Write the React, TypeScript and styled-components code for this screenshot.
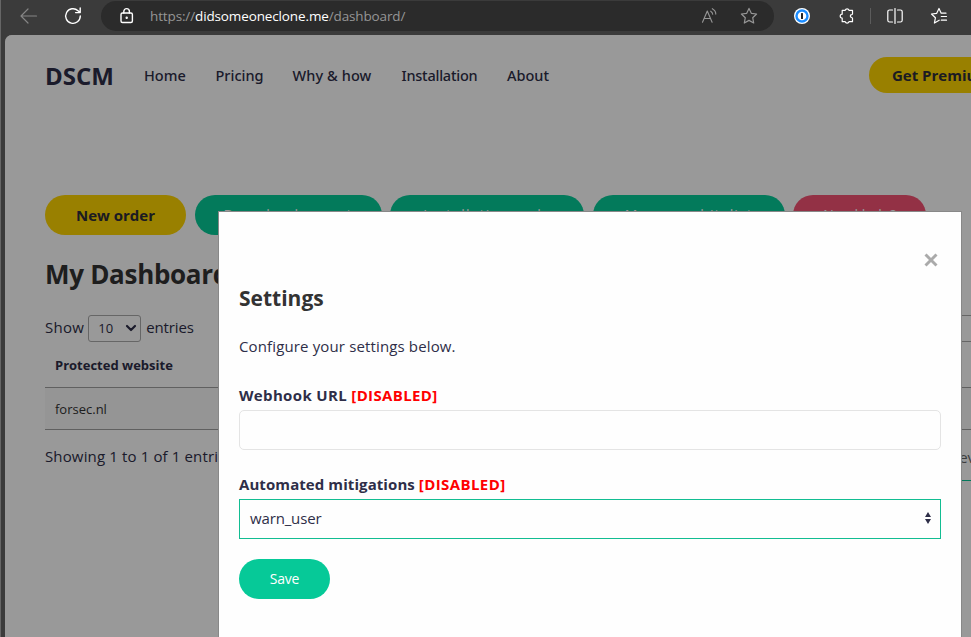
import React from 'react';
import styled, { createGlobalStyle } from 'styled-components';

const Global = createGlobalStyle`
  * { box-sizing: border-box; }
  html, body { margin: 0; width: 971px; height: 637px; overflow: hidden; background: #3b3b3b; }
  body, button, select, input { font-family: "Open Sans", "Noto Sans", sans-serif; }
`;

const Window = styled.div`
  width: 971px;
  height: 637px;
  overflow: hidden;
  display: flex;
  flex-direction: column;
  background: #3b3b3b;
  border-left: 1px solid #666;
  color: #2e2e48;
`;

const Text = styled.span<{ $ls?: number }>`
  letter-spacing: ${(p) => p.$ls ?? 0}px;
  white-space: nowrap;
`;

const Toolbar = styled.div`
  flex: none;
  height: 35px;
  display: flex;
  align-items: flex-start;
`;

const NavIcons = styled.div`
  width: 100px;
  height: 32px;
  display: flex;
  align-items: center;
  padding-left: 18px;
  gap: 25px;
`;

const AddressBar = styled.div`
  width: 673px;
  height: 30px;
  margin-top: 1px;
  padding: 0 16px 0 17px;
  border-radius: 15px;
  background: #2b2b2b;
  display: flex;
  align-items: center;
`;

const Url = styled.div`
  flex: 1;
  margin-left: 14px;
  font-size: 13.5px;
  line-height: 20px;
  color: #969696;
  white-space: nowrap;
  b { font-weight: 400; color: #fff; }
`;

const AddressActions = styled.div`
  display: flex;
  align-items: center;
  gap: 22px;
`;

const Extensions = styled.div`
  height: 32px;
  display: flex;
  align-items: center;
  margin-left: 20px;
`;

const Separator = styled.i`
  width: 1px;
  height: 16px;
  margin: 0 15px 0 14px;
  background: #5c5c5c;
`;

const Gap = styled.i<{ $w: number }>`
  width: ${(p) => p.$w}px;
`;

const Page = styled.main`
  position: relative;
  flex: 1;
  margin-left: 4px;
  background: #fff;
  border-top-left-radius: 7px;
  overflow: hidden;
`;

const Header = styled.header`
  height: 80px;
  padding-left: 40px;
  display: flex;
  align-items: center;
  width: 1100px;
`;

const Logo = styled.div`
  width: 99px;
  font-size: 24px;
  font-weight: 700;
`;

const Menu = styled.nav`
  display: flex;
  width: 725px;
  font-family: "Noto Sans", "Open Sans", sans-serif;
  font-size: 14.5px;
  font-weight: 500;
`;

const MenuItem = styled.a<{ $w: number }>`
  width: ${(p) => p.$w}px;
`;

const Pill = styled.button<{ $w: number; $h: number; $bg: string; $dark?: boolean }>`
  flex: none;
  width: ${(p) => p.$w}px;
  height: ${(p) => p.$h}px;
  padding: 0 0 1px;
  border: 0;
  border-radius: 20px;
  background: ${(p) => p.$bg};
  color: ${(p) => (p.$dark ? '#2e2e3a' : '#fff')};
  font-size: ${(p) => (p.$dark ? 15 : 14)}px;
  font-weight: ${(p) => (p.$dark ? 700 : 400)};
`;

const Actions = styled.div`
  display: flex;
  gap: 8.6px;
  margin: 80px 0 0 40px;
  width: 1000px;
`;

const Title = styled.h1`
  margin: 20px 0 0 40px;
  font-size: 26px;
  line-height: 38px;
  font-weight: 700;
  color: #333;
`;

const Length = styled.div`
  display: flex;
  align-items: center;
  width: 1000px;
  height: 28px;
  margin: 21px 0 0 40px;
  font-size: 15px;
  > span { margin-top: -2px; }
`;

const LengthSelect = styled.div`
  flex: none;
  display: flex;
  align-items: center;
  justify-content: space-between;
  width: 53px;
  height: 27px;
  margin: 0 5px 0 4px;
  padding: 0 3px 0 9px;
  border: 1px solid #aaa;
  border-radius: 3px;
  font-size: 13px;
`;

const Filter = styled.div`
  flex: none;
  width: 180px;
  height: 27px;
  margin-left: 730px;
  border: 1px solid #aaa;
`;

const Table = styled.div`
  margin-left: 40px;
  width: 1000px;
`;

const HeadRow = styled.div`
  height: 46px;
  padding: 0 10px;
  display: flex;
  align-items: center;
  font-size: 13px;
  font-weight: 700;
  border-bottom: 1px solid #a0a0a0;
`;

const Row = styled.div`
  height: 42px;
  padding: 0 10px;
  display: flex;
  align-items: center;
  font-size: 13px;
  background: #f9f9f9;
  color: #333;
  border-bottom: 1px solid #a0a0a0;
`;

const TableFooter = styled.div`
  display: flex;
  align-items: flex-start;
  width: 1000px;
  height: 52px;
  margin-left: 40px;
  font-size: 15px;
  line-height: 52px;
`;

const PageLink = styled.div`
  margin-left: auto;
  width: 115px;
  height: 51px;
  padding-left: 14px;
  font-size: 15px;
  line-height: 55px;
  color: #666;
  border-bottom: 1px solid #06c998;
`;

const Backdrop = styled.div`
  position: absolute;
  inset: 0;
  background: rgba(0, 0, 0, 0.4);
`;

const Modal = styled.section`
  position: absolute;
  left: 213px;
  top: 176px;
  width: 744px;
  height: 480px;
  padding: 33px 20px 0;
  border: 1px solid #888;
  background: #fefefe;
`;

const CloseRow = styled.div`
  display: flex;
  justify-content: flex-end;
  height: 31px;
  padding: 7px 2px 0 0;
`;

const ModalTitle = styled.h2`
  margin: 5px 0 0;
  font-size: 21px;
  line-height: 34px;
  font-weight: 700;
  color: #333;
`;

const Lead = styled.p`
  margin: 19px 0 0;
  font-size: 15px;
  line-height: 24px;
`;

const Label = styled.div`
  height: 27px;
  font-size: 15px;
  line-height: 24px;
  font-weight: 700;
  em { font-style: normal; color: #f00; }
`;

const Field = styled.div<{ $top: number }>`
  margin-top: ${(p) => p.$top}px;
`;

const Input = styled.input`
  display: block;
  width: 702px;
  height: 40px;
  border: 1px solid #e4e4e4;
  border-radius: 5px;
  background: #fefefe;
`;

const Select = styled.div`
  display: flex;
  align-items: center;
  justify-content: space-between;
  width: 702px;
  height: 40px;
  padding: 0 9px 2px 10px;
  border: 1px solid #12bd92;
  font-size: 15px;
`;

const SaveRow = styled.div`
  margin-top: 20px;
`;

const Svg = ({ w, h, children, color = '#fff', sw = 1.2 }: { w: number; h: number; children: React.ReactNode; color?: string; sw?: number }) => (
  <svg width={w} height={h} viewBox={`0 0 ${w} ${h}`} fill="none" stroke={color} strokeWidth={sw} strokeLinecap="round" strokeLinejoin="round">
    {children}
  </svg>
);

export default function App() {
  return (
    <>
      <Global />
      <Window>
        <Toolbar>
          <NavIcons>
            <Svg w={20} h={16} color="#858585"><path d="M17.5 8H2M9 1 2 8l7 7" /></Svg>
            <Svg w={18} h={18} sw={1.4}><path d="M16.3 9A7.3 7.3 0 1 1 14 3.7L16 5.5M16.2 1v4.6h-4.6" /></Svg>
          </NavIcons>
          <AddressBar>
            <Svg w={18} h={18} sw={1.4}><path d="M5.8 6V4.4a2.7 2.7 0 0 1 5.6 0V6" /><rect x="3" y="6" width="11.4" height="9.5" rx="1.5" /><circle cx="8.7" cy="10.8" r=".5" fill="#fff" /></Svg>
            <Url><Text $ls={-0.13}>https://<b>didsomeoneclone.me</b>/dashboard/</Text></Url>
            <AddressActions>
              <Svg w={18} h={18} color="#969696" sw={1.1}><path d="M2.5 15.3 7.3 4l4.8 11.3M4.2 11.5h6.2M10.7 4.2c1.2.7 1.9 1.8 2 3.1M12.3 1.7c2.2 1.2 3.5 3.1 3.5 5.4" /></Svg>
              <Svg w={18} h={18} color="#969696"><path d="m9 1.4 2.3 4.9 5.3.7-3.9 3.7 1 5.3L9 13.4 4.3 16l1-5.3L1.4 7l5.3-.7Z" /></Svg>
            </AddressActions>
          </AddressBar>
          <Extensions>
            <svg width="16" height="16" viewBox="0 0 16 16"><circle cx="8" cy="8" r="8" fill="#fff" /><circle cx="8" cy="8" r="5.5" fill="#fff" stroke="#1a8cff" strokeWidth="2.4" /><rect x="7" y="5" width="2" height="6" rx=".5" fill="#222" /></svg>
            <Gap $w={28} />
            <Svg w={18} h={18}><path d="M4.2 3.3h3a2 2 0 0 1 3.8 0h3.5v3.6a1 1 0 0 1-.8.8 1.4 1.4 0 0 0 0 2.8 1 1 0 0 1 .8.8v3.4H11a2 2 0 0 1-3.8 0h-3v-3.5a2 2 0 0 1 0-4Z" /></Svg>
            <Separator />
            <Svg w={18} h={16}><path d="M6.5 2H3.6A1.8 1.8 0 0 0 1.8 3.8v8.4A1.8 1.8 0 0 0 3.6 14h2.9M11.5 2h2.9a1.8 1.8 0 0 1 1.8 1.8v8.4a1.8 1.8 0 0 1-1.8 1.8h-2.9M9 .5v15" /></Svg>
            <Gap $w={26} />
            <Svg w={18} h={18}><path d="M9.2 13.2 4.4 16l1-5.2L1.5 7l5.2-.7L9 1.5l2.2 4.7H16M11.3 9.5H16.5M11.3 13.2H16.5" /></Svg>
          </Extensions>
        </Toolbar>
        <Page>
          <Header>
            <Logo><Text>DSCM</Text></Logo>
            <Menu>
              <MenuItem $w={71.5}><Text>Home</Text></MenuItem>
              <MenuItem $w={77}><Text>Pricing</Text></MenuItem>
              <MenuItem $w={109}><Text $ls={0.1}>Why &amp; how</Text></MenuItem>
              <MenuItem $w={105.5}><Text $ls={-0.23}>Installation</Text></MenuItem>
              <MenuItem $w={60}><Text>About</Text></MenuItem>
            </Menu>
            <Pill $w={145} $h={36} $bg="#ffd500" $dark><Text>Get Premium</Text></Pill>
          </Header>
          <Actions>
            <Pill $w={141} $h={40} $bg="#ffd500" $dark><Text>New order</Text></Pill>
            <Pill $w={187} $h={40} $bg="#06cb98"><Text $ls={1.2}>Download report</Text></Pill>
            <Pill $w={194} $h={40} $bg="#06cb98"><Text $ls={1.2}>Installation code</Text></Pill>
            <Pill $w={192} $h={40} $bg="#06cb98"><Text $ls={1.1}>Manage whitelist</Text></Pill>
            <Pill $w={133} $h={40} $bg="#f55274"><Text>Need help?</Text></Pill>
          </Actions>
          <Title><Text $ls={-0.3}>My Dashboard</Text></Title>
          <Length>
            <Text $ls={0.3}>Show</Text>
            <LengthSelect><Text>10</Text><Svg w={12} h={10} sw={2.2} color="#2e2e48"><path d="m2 3 4 4 4-4" /></Svg></LengthSelect>
            <Text $ls={-0.15}>entries</Text>
            <Filter />
          </Length>
          <Table>
            <HeadRow><Text>Protected website</Text></HeadRow>
            <Row><Text>forsec.nl</Text></Row>
          </Table>
          <TableFooter>
            <Text $ls={0.14}>Showing 1 to 1 of 1 entries</Text>
            <PageLink>Previous</PageLink>
          </TableFooter>
          <Backdrop />
          <Modal>
            <CloseRow><Svg w={16} h={16} sw={2.9} color="#aaa"><path d="m2.5 2.5 11 11m0-11-11 11" strokeLinecap="butt" /></Svg></CloseRow>
            <ModalTitle><Text>Settings</Text></ModalTitle>
            <Lead><Text $ls={0.14}>Configure your settings below.</Text></Lead>
            <Field $top={25}>
              <Label><Text $ls={0.35}>Webhook URL <em>[DISABLED]</em></Text></Label>
              <Input />
            </Field>
            <Field $top={22}>
              <Label><Text $ls={0.08}>Automated mitigations <em><Text $ls={0.4}>[DISABLED]</Text></em></Text></Label>
              <Select>
                <Text $ls={-0.15}>warn_user</Text>
                <svg width="6" height="12" viewBox="0 0 6 12" fill="#2e2e48"><path d="M3 0 6 5H0ZM3 12 0 7h6Z" /></svg>
              </Select>
            </Field>
            <SaveRow><Pill $w={91} $h={40} $bg="#06c998"><Text $ls={-0.2}>Save</Text></Pill></SaveRow>
          </Modal>
        </Page>
      </Window>
    </>
  );
}
